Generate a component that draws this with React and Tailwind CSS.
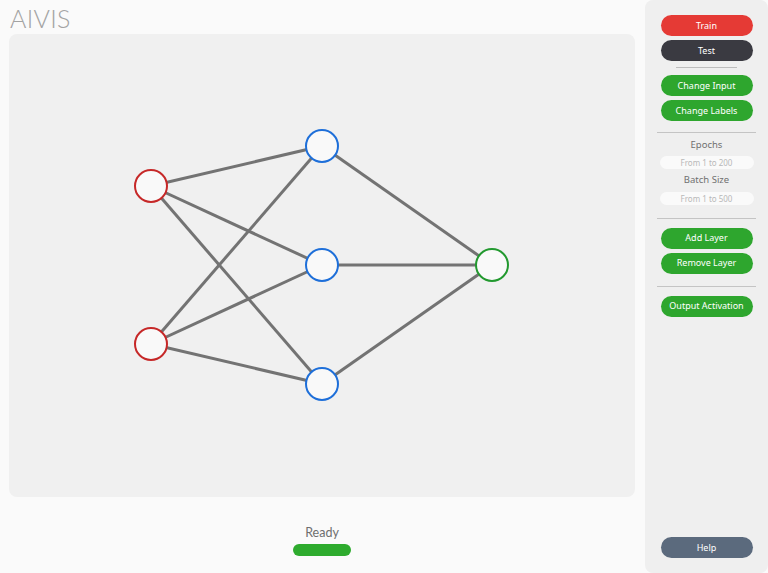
import React from 'react';

const nodes = [
  { id: 'i1', x: 142, y: 152, color: '#c62828' },
  { id: 'i2', x: 142, y: 310, color: '#c62828' },
  { id: 'h1', x: 313, y: 112, color: '#1e6fd9' },
  { id: 'h2', x: 313, y: 231, color: '#1e6fd9' },
  { id: 'h3', x: 313, y: 350, color: '#1e6fd9' },
  { id: 'o1', x: 483, y: 231, color: '#22992f' },
];

const edges = [
  ['i1', 'h1'], ['i1', 'h2'], ['i1', 'h3'],
  ['i2', 'h1'], ['i2', 'h2'], ['i2', 'h3'],
  ['h1', 'o1'], ['h2', 'o1'], ['h3', 'o1'],
];

const byId = Object.fromEntries(nodes.map((n) => [n.id, n]));

const Network = () => (
  <svg viewBox="0 0 626 463" className="block h-full w-full">
    {edges.map(([a, b]) => (
      <line
        key={a + b}
        x1={byId[a].x}
        y1={byId[a].y}
        x2={byId[b].x}
        y2={byId[b].y}
        stroke="#737373"
        strokeWidth="3"
      />
    ))}
    {nodes.map((n) => (
      <circle key={n.id} cx={n.x} cy={n.y} r="16" fill="#f9f9f9" stroke={n.color} strokeWidth="2" />
    ))}
  </svg>
);

const SideButton = ({ children, className = '' }) => (
  <button
    className={`h-[21px] w-[92px] rounded-full text-[9px] text-white ${className}`}
  >
    {children}
  </button>
);

const Field = ({ label, placeholder }) => (
  <div className="flex flex-col items-center">
    <div className="text-[9.5px] text-[#707070]">{label}</div>
    <input
      placeholder={placeholder}
      className="mt-[4px] h-[13px] w-[94px] rounded-full bg-[#fafafa] text-center text-[8px] text-[#555] outline-none placeholder:text-[#b8b8b8]"
    />
  </div>
);

export default function App() {
  return (
    <div className="flex h-[573px] w-[768px] overflow-hidden bg-[#fafafa]" style={{ fontFamily: '"Noto Sans", sans-serif' }}>
      <main className="flex w-[645px] flex-col pl-[9px] pr-[10px]">
        <h1
          className="h-[34px] pt-[3px] pl-[1px] text-[25px] font-light leading-[30px] tracking-[0.3px] text-[#a3a3a3]"
          style={{ fontFamily: 'Lato, sans-serif' }}
        >
          AIVIS
        </h1>
        <div className="h-[463px] rounded-lg bg-[#f0f0f0]">
          <Network />
        </div>
        <div className="flex flex-col items-center pt-[28px]" style={{ fontFamily: 'Lato, sans-serif' }}>
          <div className="text-[12.5px] leading-[16px] text-[#6e6e6e]">Ready</div>
          <div className="mt-[3px] h-[12px] w-[58px] rounded-full bg-[#2eab2e]" />
        </div>
      </main>

      <aside className="flex w-[123px] flex-col items-center rounded-lg bg-[#efefef] pt-[15px] pb-[15px]">
        <SideButton className="bg-[#e53a35]">Train</SideButton>
        <SideButton className="mt-[4px] bg-[#3a3a41]">Test</SideButton>
        <div className="mt-[6px] h-px w-[61px] bg-[#bdbdbd]" />
        <SideButton className="mt-[7px] bg-[#2ea62e]">Change Input</SideButton>
        <SideButton className="mt-[4px] bg-[#2ea62e]">Change Labels</SideButton>
        <div className="mt-[11px] h-px w-[99px] bg-[#c4c4c4]" />
        <div className="mt-[5px] flex flex-col items-center gap-[4px]">
          <Field label="Epochs" placeholder="From 1 to 200" />
          <Field label="Batch Size" placeholder="From 1 to 500" />
        </div>
        <div className="mt-[13px] h-px w-[99px] bg-[#c4c4c4]" />
        <SideButton className="mt-[9px] bg-[#2ea62e]">Add Layer</SideButton>
        <SideButton className="mt-[4px] bg-[#2ea62e]">Remove Layer</SideButton>
        <div className="mt-[12px] h-px w-[99px] bg-[#c4c4c4]" />
        <SideButton className="mt-[9px] bg-[#2ea62e]">Output Activation</SideButton>
        <div className="flex-1" />
        <SideButton className="h-[19px] bg-[#5b6a7d]">Help</SideButton>
      </aside>
    </div>
  );
}
